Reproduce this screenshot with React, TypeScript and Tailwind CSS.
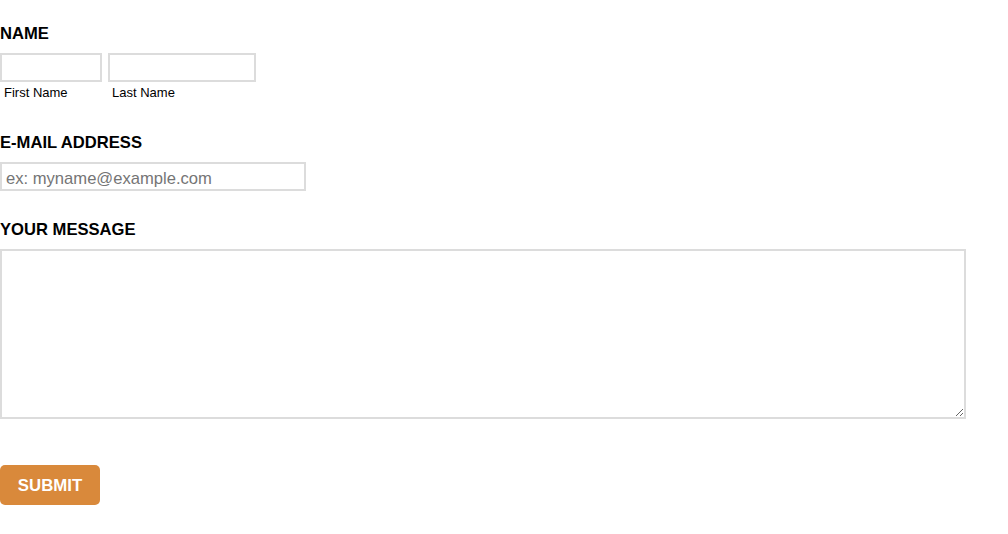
import React from 'react';

const App: React.FC = () => {
  const headingCls = 'text-[16.6px] font-bold leading-[18px] text-black';
  const inputCls = 'h-[29px] border-2 border-[#dcdcdc] bg-white px-[4px] pt-[4px] text-[16.6px] outline-none placeholder:text-[#757575]';

  return (
    <div className="min-h-screen w-full bg-white font-['Liberation_Sans',Arial,sans-serif]">
      <form className="flex flex-col pt-[25px]" onSubmit={(e) => e.preventDefault()}>
        <h3 className={headingCls}>NAME</h3>
        <div className="mt-[10px] flex gap-[6px]">
          <div className="flex flex-col">
            <input className={`${inputCls} w-[102px]`} type="text" />
            <span className="mt-[3px] pl-1 text-[13px] leading-[16px] text-black">First Name</span>
          </div>
          <div className="flex flex-col">
            <input className={`${inputCls} w-[148px]`} type="text" />
            <span className="mt-[3px] pl-1 text-[13px] leading-[16px] text-black">Last Name</span>
          </div>
        </div>

        <h3 className={`${headingCls} mt-[33px]`}>E-MAIL ADDRESS</h3>
        <input className={`${inputCls} mt-[10px] w-[306px]`} type="email" placeholder="ex: myname@example.com" />

        <h3 className={`${headingCls} mt-[30px]`}>YOUR MESSAGE</h3>
        <textarea className="mt-[10px] h-[170px] w-[966px] border-2 border-[#dcdcdc] bg-white p-1 text-base outline-none" />

        <div className="mt-[46px]">
          <button type="submit" className="h-[40px] w-[100px] rounded-[5px] bg-[#d9893b] pt-[2px] text-[16.8px] font-bold text-white">
            SUBMIT
          </button>
        </div>
      </form>
    </div>
  );
};

export default App;
